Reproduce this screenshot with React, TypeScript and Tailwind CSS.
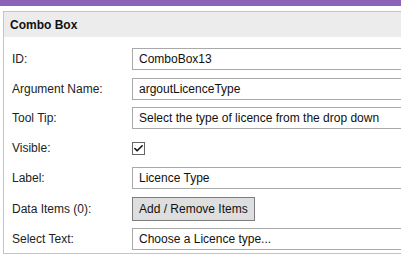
import { Check } from 'lucide-react';

type Row = {
  label: string;
  kind: 'input' | 'checkbox' | 'button';
  value?: string;
  h: string;
};

const ROWS: Row[] = [
  { label: 'ID:', kind: 'input', value: 'ComboBox13', h: 'h-[30px]' },
  { label: 'Argument Name:', kind: 'input', value: 'argoutLicenceType', h: 'h-[29px]' },
  { label: 'Tool Tip:', kind: 'input', value: 'Select the type of licence from the drop down', h: 'h-[30px]' },
  { label: 'Visible:', kind: 'checkbox', h: 'h-[30px]' },
  { label: 'Label:', kind: 'input', value: 'Licence Type', h: 'h-[30px]' },
  { label: 'Data Items (0):', kind: 'button', value: 'Add / Remove Items', h: 'h-[31px]' },
  { label: 'Select Text:', kind: 'input', value: 'Choose a Licence type...', h: 'h-[29px]' },
];

export default function App() {
  return (
    <div className="w-[401px] h-[256px] overflow-hidden bg-white font-['Liberation_Sans',Arial,sans-serif] text-[12px] text-[#222]">
      {/* top accent bar */}
      <div className="h-[6px] bg-[#8b63b8]" />

      <div className="mt-[5px] ml-[3px] w-[600px] border border-[#c4c4c4]">
        <div className="h-[25px] flex items-center pl-[6px] bg-[#ececec] font-bold text-[12px] text-[#111]">
          Combo Box
        </div>

        <div className="pt-[7px] pl-[8px]">
          {ROWS.map((row) => (
            <div key={row.label} className={`flex items-center ${row.h}`}>
              <div className="w-[120px] shrink-0">{row.label}</div>
              {row.kind === 'input' && (
                <div className="flex-1 h-[22px] flex items-center px-[6px] border border-[#a9a9a9] bg-white text-[#111]">
                  {row.value}
                </div>
              )}
              {row.kind === 'checkbox' && (
                <div className="w-[13px] h-[13px] border border-[#666] flex items-center justify-center bg-white">
                  <Check size={11} strokeWidth={3.5} className="text-[#111]" />
                </div>
              )}
              {row.kind === 'button' && (
                <div className="h-[24px] px-[6px] flex items-center border border-[#7c7c7c] bg-[#dedede] text-[#111]">
                  {row.value}
                </div>
              )}
            </div>
          ))}
        </div>
      </div>
    </div>
  );
}
